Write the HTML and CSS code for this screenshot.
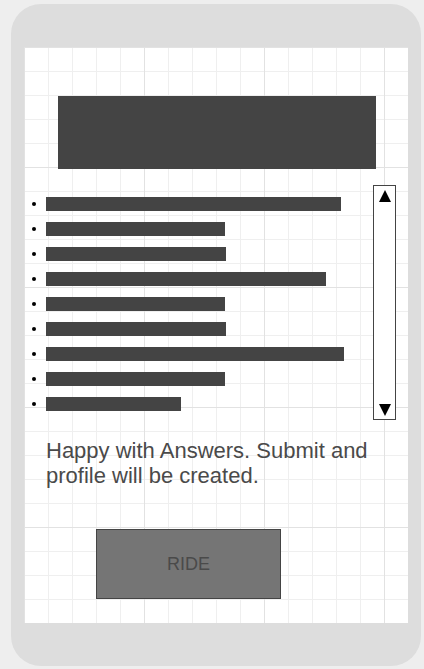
FILE: index.html
```html
<!DOCTYPE html>
<html>
<head>
<meta charset="utf-8">
<link rel="stylesheet" href="styles.css">
</head>
<body>
<div class="phone">
  <div class="screen">
    <div class="header-block"></div>
    <div class="list-area">
      <ul class="items">
        <li><span class="bar" style="width:295px"></span></li>
        <li><span class="bar" style="width:179px"></span></li>
        <li><span class="bar" style="width:180px"></span></li>
        <li><span class="bar" style="width:280px"></span></li>
        <li><span class="bar" style="width:179px"></span></li>
        <li><span class="bar" style="width:180px"></span></li>
        <li><span class="bar" style="width:298px"></span></li>
        <li><span class="bar" style="width:179px"></span></li>
        <li><span class="bar" style="width:135px"></span></li>
      </ul>
      <div class="scrollbar">
        <svg class="arrow" width="12" height="12" viewBox="0 0 12 12"><polygon points="6,0 12,12 0,12" fill="#000"/></svg>
        <svg class="arrow" width="12" height="12" viewBox="0 0 12 12"><polygon points="0,0 12,0 6,12" fill="#000"/></svg>
      </div>
    </div>
    <p class="message">Happy with Answers. Submit and profile will be created.</p>
    <div class="ride-btn">RIDE</div>
  </div>
</div>
</body>
</html>
```

FILE: styles.css
```css
html, body {
  margin: 0;
  padding: 0;
}
body {
  background: #eeeeee;
  width: 424px;
  height: 669px;
  overflow: hidden;
  font-family: "Liberation Sans", Arial, sans-serif;
}
.phone {
  box-sizing: border-box;
  margin: 4px 0 0 11px;
  width: 410px;
  height: 662px;
  border-radius: 30px;
  background: #dddddd;
  padding: 43px 0 0 13px;
}
.screen {
  box-sizing: border-box;
  width: 384px;
  height: 576px;
  padding-top: 49px;
  background-color: #ffffff;
  background-image:
    linear-gradient(to right, #e2e2e2 1px, transparent 1px),
    linear-gradient(to bottom, #e2e2e2 1px, transparent 1px),
    linear-gradient(to right, #efefef 1px, transparent 1px),
    linear-gradient(to bottom, #efefef 1px, transparent 1px);
  background-size: 120px 120px, 120px 120px, 24px 24px, 24px 24px;
  background-position: 0 0;
  display: flex;
  flex-direction: column;
}
.header-block {
  margin-left: 34px;
  width: 318px;
  height: 73px;
  background: #444444;
  flex: none;
}
.list-area {
  margin-top: 16px;
  display: flex;
  flex: none;
}
.items {
  list-style: none;
  margin: 12px 0 0 0;
  padding: 0;
  width: 349px;
  flex: none;
}
.items li {
  display: flex;
  align-items: center;
  height: 14px;
  margin-bottom: 11px;
}
.items li::before {
  content: "";
  width: 4px;
  height: 4px;
  border-radius: 50%;
  background: #000;
  margin-left: 8px;
  margin-right: 10px;
  flex: none;
}
.bar {
  display: block;
  height: 14px;
  background: #444444;
}
.scrollbar {
  box-sizing: border-box;
  width: 23px;
  height: 235px;
  border: 1px solid #444444;
  background: #ffffff;
  display: flex;
  flex-direction: column;
  justify-content: space-between;
  align-items: center;
  padding: 4px 0 3px 0;
  flex: none;
}
.arrow {
  display: block;
}
.message {
  margin: 16px 0 0 22px;
  width: 340px;
  font-size: 22px;
  line-height: 25px;
  color: #4a4a4a;
}
.ride-btn {
  box-sizing: border-box;
  margin: 41px 0 0 72px;
  width: 185px;
  height: 70px;
  background: #757575;
  border: 1px solid #444444;
  color: #4a4a4a;
  font-size: 18px;
  display: flex;
  align-items: center;
  justify-content: center;
}
```
